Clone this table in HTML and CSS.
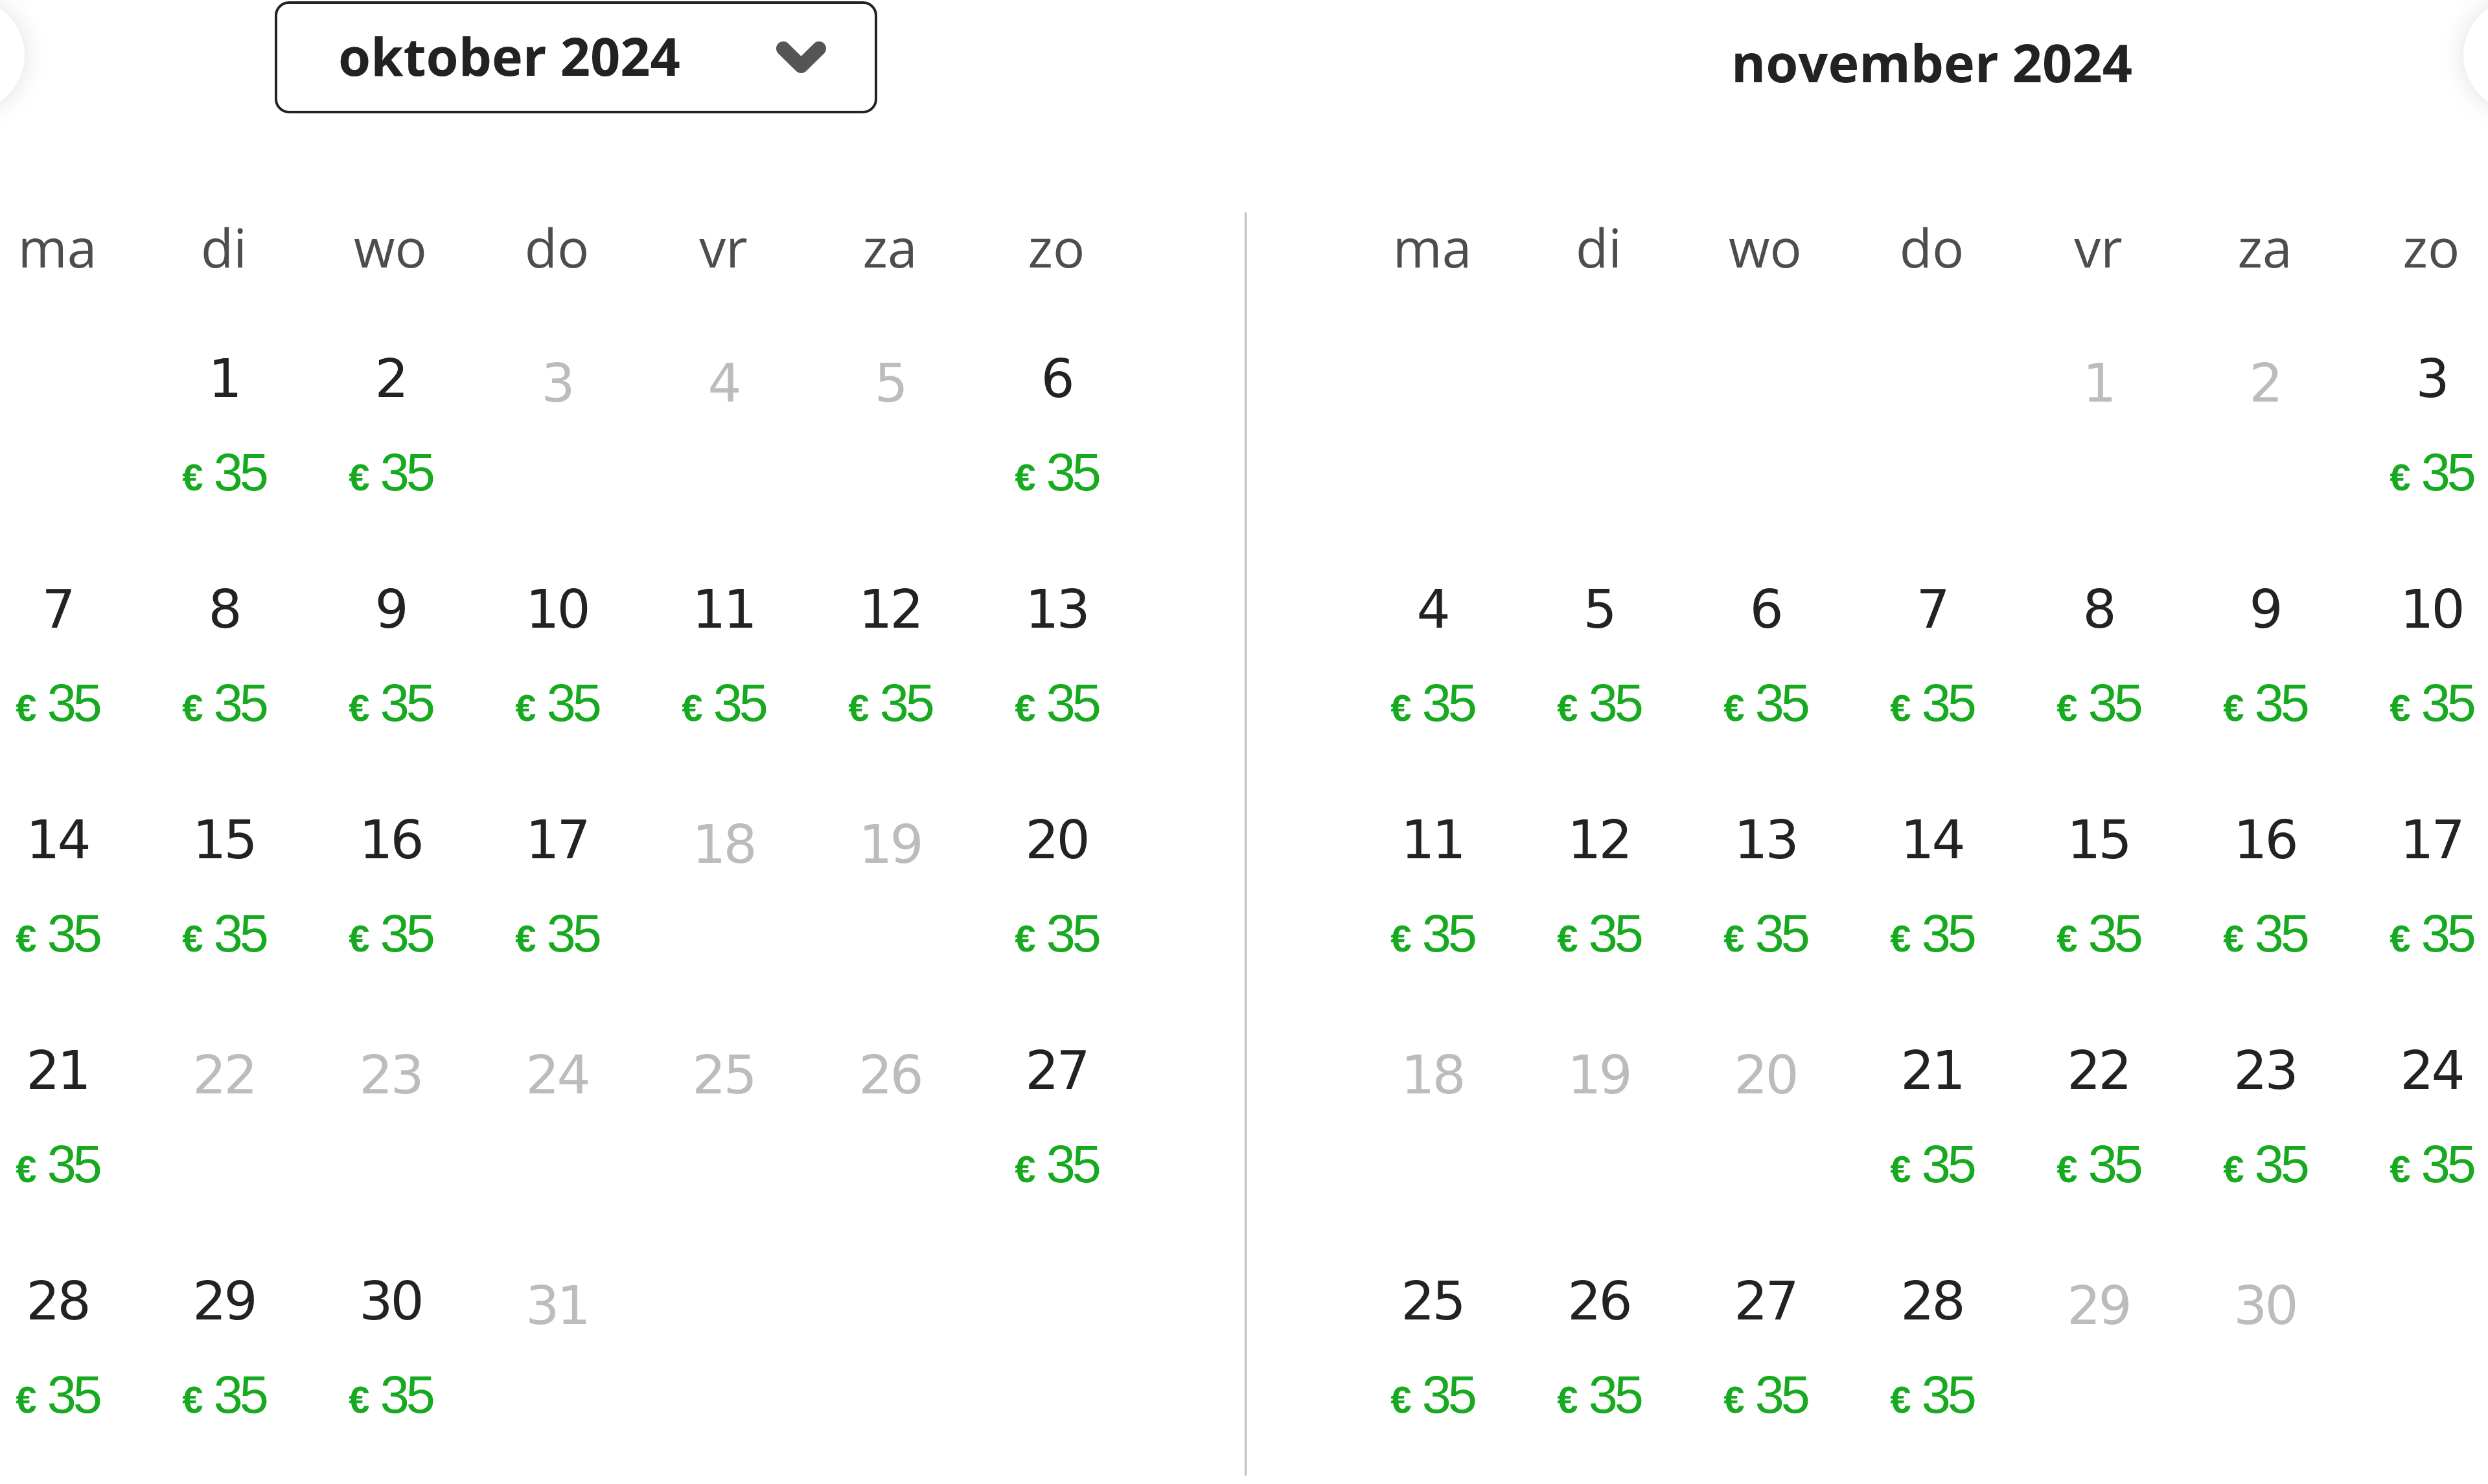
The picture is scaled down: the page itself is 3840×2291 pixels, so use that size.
FILE: index.html
```html
<!DOCTYPE html>
<html lang="nl">
<head>
<meta charset="utf-8">
<title>Kalender</title>
<link rel="stylesheet" href="styles.css">
</head>
<body>
<button class="nav nav-prev" aria-label="Vorige maand"><svg viewBox="0 0 40 40" width="40" height="40"><polyline points="26,8 14,20 26,32" fill="none" stroke="#333" stroke-width="5" stroke-linecap="round" stroke-linejoin="round"/></svg></button>
<button class="nav nav-next" aria-label="Volgende maand"><svg viewBox="0 0 40 40" width="40" height="40"><polyline points="14,8 26,20 14,32" fill="none" stroke="#333" stroke-width="5" stroke-linecap="round" stroke-linejoin="round"/></svg></button>

<div class="page">
  <section class="month">
    <div class="month-head with-select">
      <div class="select">
        <span class="select-label">oktober 2024</span>
        <svg class="chev" viewBox="0 0 83 55" width="83" height="55"><polyline points="14,14 41.5,41 69,14" fill="none" stroke="#555" stroke-width="22" stroke-linecap="round" stroke-linejoin="round"/></svg>
      </div>
    </div>
    <div class="weekdays">
      <div class="wd">ma</div><div class="wd">di</div><div class="wd">wo</div><div class="wd">do</div><div class="wd">vr</div><div class="wd">za</div><div class="wd">zo</div>
    </div>
    <div class="days">
      <div class="day empty"></div>
      <div class="day"><div class="num">1</div><div class="price"><span class="cur">€ </span>35</div></div>
      <div class="day"><div class="num">2</div><div class="price"><span class="cur">€ </span>35</div></div>
      <div class="day off"><div class="num">3</div></div>
      <div class="day off"><div class="num">4</div></div>
      <div class="day off"><div class="num">5</div></div>
      <div class="day"><div class="num">6</div><div class="price"><span class="cur">€ </span>35</div></div>

      <div class="day"><div class="num">7</div><div class="price"><span class="cur">€ </span>35</div></div>
      <div class="day"><div class="num">8</div><div class="price"><span class="cur">€ </span>35</div></div>
      <div class="day"><div class="num">9</div><div class="price"><span class="cur">€ </span>35</div></div>
      <div class="day"><div class="num">10</div><div class="price"><span class="cur">€ </span>35</div></div>
      <div class="day"><div class="num">11</div><div class="price"><span class="cur">€ </span>35</div></div>
      <div class="day"><div class="num">12</div><div class="price"><span class="cur">€ </span>35</div></div>
      <div class="day"><div class="num">13</div><div class="price"><span class="cur">€ </span>35</div></div>

      <div class="day"><div class="num">14</div><div class="price"><span class="cur">€ </span>35</div></div>
      <div class="day"><div class="num">15</div><div class="price"><span class="cur">€ </span>35</div></div>
      <div class="day"><div class="num">16</div><div class="price"><span class="cur">€ </span>35</div></div>
      <div class="day"><div class="num">17</div><div class="price"><span class="cur">€ </span>35</div></div>
      <div class="day off"><div class="num">18</div></div>
      <div class="day off"><div class="num">19</div></div>
      <div class="day"><div class="num">20</div><div class="price"><span class="cur">€ </span>35</div></div>

      <div class="day"><div class="num">21</div><div class="price"><span class="cur">€ </span>35</div></div>
      <div class="day off"><div class="num">22</div></div>
      <div class="day off"><div class="num">23</div></div>
      <div class="day off"><div class="num">24</div></div>
      <div class="day off"><div class="num">25</div></div>
      <div class="day off"><div class="num">26</div></div>
      <div class="day"><div class="num">27</div><div class="price"><span class="cur">€ </span>35</div></div>

      <div class="day"><div class="num">28</div><div class="price"><span class="cur">€ </span>35</div></div>
      <div class="day"><div class="num">29</div><div class="price"><span class="cur">€ </span>35</div></div>
      <div class="day"><div class="num">30</div><div class="price"><span class="cur">€ </span>35</div></div>
      <div class="day off"><div class="num">31</div></div>
    </div>
  </section>

  <div class="divider"></div>

  <section class="month">
    <div class="month-head">
      <h2 class="month-title">november 2024</h2>
    </div>
    <div class="weekdays">
      <div class="wd">ma</div><div class="wd">di</div><div class="wd">wo</div><div class="wd">do</div><div class="wd">vr</div><div class="wd">za</div><div class="wd">zo</div>
    </div>
    <div class="days">
      <div class="day empty"></div>
      <div class="day empty"></div>
      <div class="day empty"></div>
      <div class="day empty"></div>
      <div class="day off"><div class="num">1</div></div>
      <div class="day off"><div class="num">2</div></div>
      <div class="day"><div class="num">3</div><div class="price"><span class="cur">€ </span>35</div></div>

      <div class="day"><div class="num">4</div><div class="price"><span class="cur">€ </span>35</div></div>
      <div class="day"><div class="num">5</div><div class="price"><span class="cur">€ </span>35</div></div>
      <div class="day"><div class="num">6</div><div class="price"><span class="cur">€ </span>35</div></div>
      <div class="day"><div class="num">7</div><div class="price"><span class="cur">€ </span>35</div></div>
      <div class="day"><div class="num">8</div><div class="price"><span class="cur">€ </span>35</div></div>
      <div class="day"><div class="num">9</div><div class="price"><span class="cur">€ </span>35</div></div>
      <div class="day"><div class="num">10</div><div class="price"><span class="cur">€ </span>35</div></div>

      <div class="day"><div class="num">11</div><div class="price"><span class="cur">€ </span>35</div></div>
      <div class="day"><div class="num">12</div><div class="price"><span class="cur">€ </span>35</div></div>
      <div class="day"><div class="num">13</div><div class="price"><span class="cur">€ </span>35</div></div>
      <div class="day"><div class="num">14</div><div class="price"><span class="cur">€ </span>35</div></div>
      <div class="day"><div class="num">15</div><div class="price"><span class="cur">€ </span>35</div></div>
      <div class="day"><div class="num">16</div><div class="price"><span class="cur">€ </span>35</div></div>
      <div class="day"><div class="num">17</div><div class="price"><span class="cur">€ </span>35</div></div>

      <div class="day off"><div class="num">18</div></div>
      <div class="day off"><div class="num">19</div></div>
      <div class="day off"><div class="num">20</div></div>
      <div class="day"><div class="num">21</div><div class="price"><span class="cur">€ </span>35</div></div>
      <div class="day"><div class="num">22</div><div class="price"><span class="cur">€ </span>35</div></div>
      <div class="day"><div class="num">23</div><div class="price"><span class="cur">€ </span>35</div></div>
      <div class="day"><div class="num">24</div><div class="price"><span class="cur">€ </span>35</div></div>

      <div class="day"><div class="num">25</div><div class="price"><span class="cur">€ </span>35</div></div>
      <div class="day"><div class="num">26</div><div class="price"><span class="cur">€ </span>35</div></div>
      <div class="day"><div class="num">27</div><div class="price"><span class="cur">€ </span>35</div></div>
      <div class="day"><div class="num">28</div><div class="price"><span class="cur">€ </span>35</div></div>
      <div class="day off"><div class="num">29</div></div>
      <div class="day off"><div class="num">30</div></div>
    </div>
  </section>
</div>
</body>
</html>
```

FILE: styles.css
```css
html, body {
  margin: 0;
  padding: 0;
  overflow: hidden;
  background: #fff;
}

body {
  position: relative;
  width: 3840px;
  height: 2291px;
  font-family: "Open Sans", "Noto Sans", sans-serif;
  color: #222;
}

.page {
  display: flex;
  align-items: flex-start;
  width: 3922px;
  margin-left: -40px;
}

.month {
  flex: none;
  width: 1799px;
}

.divider {
  flex: none;
  width: 3px;
  height: 1950px;
  margin: 328px 158px 0 162px;
  background: #bdbdbd;
}

.month-head {
  height: 180px;
  display: flex;
  justify-content: center;
  align-items: flex-start;
}

.month-head.with-select {
  justify-content: flex-start;
  padding-left: 464px;
}

.select {
  box-sizing: border-box;
  width: 930px;
  height: 173px;
  margin-top: 2px;
  border: 4px solid #222;
  border-radius: 22px;
  display: flex;
  align-items: center;
  justify-content: space-between;
  padding: 0 72px 0 94px;
  font-size: 81px;
  font-weight: 700;
  color: #222;
}

.select-label {
  line-height: 81px;
  margin-bottom: 6px;
  white-space: nowrap;
}

.chev {
  display: block;
  flex: none;
}

.month-title {
  margin: 46px 0 0;
  font-size: 81px;
  font-weight: 700;
  line-height: 100px;
  color: #222;
  white-space: nowrap;
}

.weekdays {
  display: grid;
  grid-template-columns: repeat(7, 257px);
  height: 100px;
  margin-top: 151px;
}

.wd {
  text-align: center;
  font-size: 82px;
  line-height: 100px;
  color: #4d4d4d;
}

.days {
  display: grid;
  grid-template-columns: repeat(7, 257px);
  grid-auto-rows: 356px;
}

.day {
  box-sizing: border-box;
  padding-top: 104px;
  text-align: center;
}

.num {
  font-family: "DejaVu Sans", "Open Sans", sans-serif;
  font-size: 82px;
  line-height: 100px;
  letter-spacing: -4px;
  color: #222;
}

.off .num {
  padding-top: 7px;
  color: #bcbcbc;
}

.price {
  margin-top: 44px;
  font-family: "Liberation Sans", Arial, sans-serif;
  font-size: 81px;
  line-height: 100px;
  letter-spacing: -5px;
  color: #17a91f;
  white-space: nowrap;
}

.cur {
  font-size: 58px;
  font-weight: 700;
  line-height: 1;
  letter-spacing: 0;
}

.nav {
  position: absolute;
  top: -2px;
  width: 174px;
  height: 174px;
  padding: 0;
  border: 0;
  border-radius: 50%;
  background: #fff;
  box-shadow: 0 0 40px rgba(0, 0, 0, 0.12);
  display: flex;
  align-items: center;
  justify-content: center;
}

.nav-prev {
  left: -136px;
}

.nav-next {
  left: 3802px;
}
```
